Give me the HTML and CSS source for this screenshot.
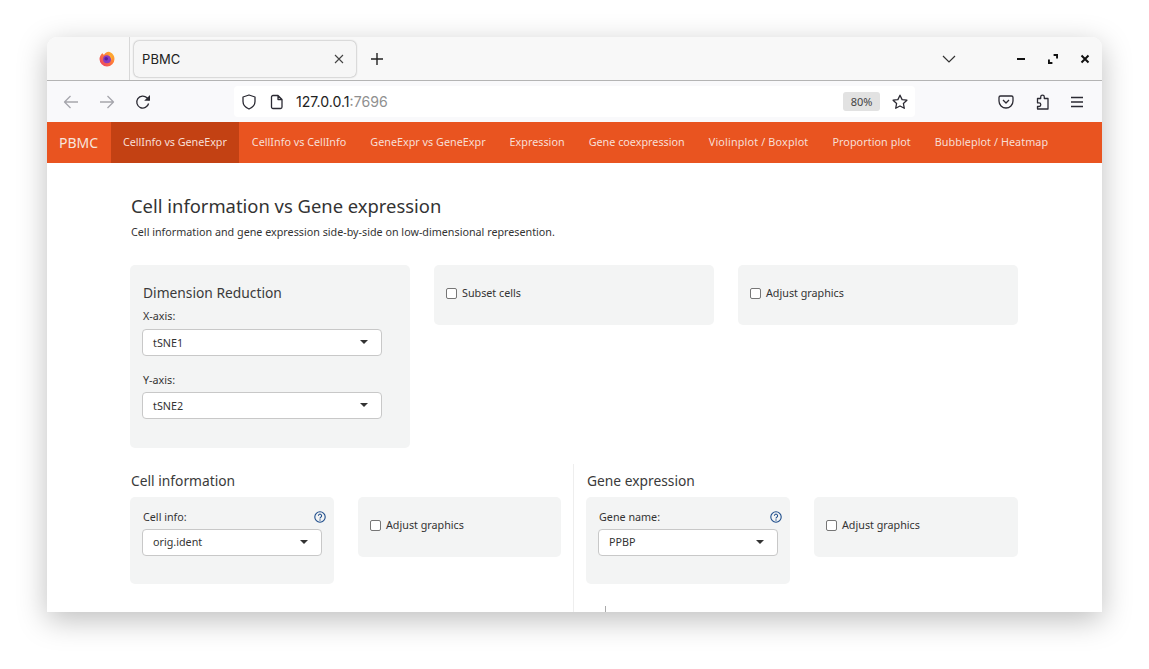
FILE: index.html
```html
<!DOCTYPE html>
<html lang="en">
<head>
<meta charset="utf-8">
<title>PBMC</title>
<link rel="stylesheet" href="styles.css">
</head>
<body>
<div class="window">
  <div class="titlebar">
    <div class="ff-slot">
      <svg class="ff" viewBox="0 0 16 16" width="16" height="16">
        <defs>
          <linearGradient id="ffg" x1="1" y1="0" x2="0" y2="1">
            <stop offset="0" stop-color="#ffc42e"/>
            <stop offset=".45" stop-color="#ff7a3a"/>
            <stop offset="1" stop-color="#e8366e"/>
          </linearGradient>
        </defs>
        <path d="M3.300 2.200C4 2.700 4.500 3.200 4.900 3.900 5.900 2.200 7.600 1 9.700.8 13 1.500 15.500 4.300 15.500 8A7.500 7.500 0 0 1 .5 8C.5 5.800 1.600 3.700 3.300 2.200Z" fill="url(#ffg)"/>
        <circle cx="8" cy="8.300" r="4" fill="#8a3cc0"/>
        <circle cx="7.200" cy="7.800" r="1.800" fill="#57209e"/>
        <path d="M11.400 3.800c1.500 1.500 2.100 3.300 1.500 5.500l-1-1.700c-.3-1.500-1.300-2.800-2.800-3.400Z" fill="#ffb02e"/>
      </svg>
    </div>
    <div class="tab"><span class="tab-title">PBMC</span>
      <svg class="tab-x" viewBox="0 0 10 10" width="10" height="10"><path d="M1 1l8 8M9 1l-8 8"/></svg>
    </div>
    <svg class="plus" viewBox="0 0 14 14" width="14" height="14"><path d="M7 1v12M1 7h12"/></svg>
    <div class="spacer"></div>
    <svg class="list-all" viewBox="0 0 14 8" width="14" height="8"><path d="M1 1l6 6 6-6"/></svg>
    <div class="win-controls">
      <svg viewBox="0 0 10 10" width="10" height="10"><path d="M1 5h8"/></svg>
      <svg viewBox="0 0 10 10" width="10" height="10"><path d="M5.600 .9h3.500v3.500M.9 5.600v3.500h3.500"/></svg>
      <svg viewBox="0 0 10 10" width="10" height="10"><path d="M1.500 1.500l7 7M8.500 1.500l-7 7"/></svg>
    </div>
  </div>
  <div class="toolbar">
    <div class="nav-btns">
      <svg class="ico dim" viewBox="0 0 16 16" width="16" height="16"><path d="M15 8H1.500M7.500 2l-6 6 6 6"/></svg>
      <svg class="ico dim" viewBox="0 0 16 16" width="16" height="16"><path d="M1 8h13.500M8.500 2l6 6-6 6"/></svg>
      <svg class="ico" viewBox="0 0 16 16" width="16" height="16"><path d="M13.600 9.500A6 6 0 1 1 12 3.800L14 6"/><path class="fill" d="M15 1v5.800H9.200Z"/></svg>
    </div>
    <div class="urlbar">
      <svg class="ico" viewBox="0 0 16 16" width="16" height="16"><path d="M8 1l6 2v4.500c0 3.500-2.500 6-6 7.500-3.500-1.500-6-4-6-7.500V3Z"/></svg>
      <svg class="ico page" viewBox="0 0 14 16" width="14" height="16"><path d="M3 1.500h5l4 4v7.500a1.500 1.500 0 0 1-1.500 1.500h-7.500A1.500 1.500 0 0 1 1.500 13V3A1.500 1.500 0 0 1 3 1.500ZM8 1.500v4h4"/></svg>
      <span class="url">127.0.0.1<span class="port">:7696</span></span>
      <div class="spacer"></div>
      <span class="zoom">80%</span>
      <svg class="ico star" viewBox="0 0 16 16" width="16" height="16"><path d="M8 1.200l2.100 4.400 4.800.6-3.500 3.300.9 4.800L8 12l-4.300 2.300.9-4.800L1.100 6.200l4.800-.6Z"/></svg>
    </div>
    <div class="tool-right">
      <svg class="ico" viewBox="0 0 16 16" width="16" height="16"><path d="M2.500 2h11A1.500 1.500 0 0 1 15 3.500V7a7 7 0 0 1-14 0V3.500A1.500 1.500 0 0 1 2.500 2ZM5 6l3 3 3-3"/></svg>
      <svg class="ico" viewBox="0 0 16 16" width="16" height="16"><path d="M6.700 4.500V3a1.800 1.800 0 0 1 3.600 0v1.500H14V15H3.500v-2.500H5a1.800 1.800 0 0 0 0-3.600H3.500V4.500Z"/></svg>
      <svg class="ico" viewBox="0 0 14 14" width="14" height="14"><path d="M1 2.500h12M1 7h12M1 11.500h12"/></svg>
    </div>
  </div>
  <nav class="navbar">
    <span class="brand">PBMC</span>
    <a class="nav-item active">CellInfo vs GeneExpr</a>
    <a class="nav-item">CellInfo vs CellInfo</a>
    <a class="nav-item">GeneExpr vs GeneExpr</a>
    <a class="nav-item">Expression</a>
    <a class="nav-item">Gene coexpression</a>
    <a class="nav-item wide">Violinplot / Boxplot</a>
    <a class="nav-item tight-wide">Proportion plot</a>
    <a class="nav-item tight-wide">Bubbleplot / Heatmap</a>
  </nav>
  <main class="content">
    <h3 class="page-title">Cell information vs Gene expression</h3>
    <p class="lead">Cell information and gene expression side-by-side on low-dimensional represention.</p>
    <div class="row-top">
      <section class="well well-dim">
        <h4 class="well-title">Dimension Reduction</h4>
        <label class="field-label">X-axis:</label>
        <div class="select">tSNE1<i class="caret"></i></div>
        <label class="field-label second">Y-axis:</label>
        <div class="select">tSNE2<i class="caret"></i></div>
      </section>
      <section class="well well-check"><label class="check"><i class="box"></i>Subset cells</label></section>
      <section class="well well-check"><label class="check"><i class="box"></i>Adjust graphics</label></section>
    </div>
    <div class="row-split">
      <div class="col col-left">
        <h4 class="section-title">Cell information</h4>
        <div class="pair">
          <section class="well well-input">
            <div class="label-row"><label class="field-label">Cell info:</label>
              <svg class="help" viewBox="0 0 12 12" width="12" height="12"><circle cx="6" cy="6" r="5.200"/><path d="M4.400 4.700a1.600 1.600 0 1 1 2.500 1.400c-.6.400-.9.700-.9 1.300"/><circle class="dot" cx="6" cy="9" r=".7"/></svg>
            </div>
            <div class="select">orig.ident<i class="caret"></i></div>
          </section>
          <section class="well well-check"><label class="check"><i class="box"></i>Adjust graphics</label></section>
        </div>
      </div>
      <div class="col col-right">
        <h4 class="section-title">Gene expression</h4>
        <div class="pair">
          <section class="well well-input">
            <div class="label-row"><label class="field-label">Gene name:</label>
              <svg class="help" viewBox="0 0 12 12" width="12" height="12"><circle cx="6" cy="6" r="5.200"/><path d="M4.400 4.700a1.600 1.600 0 1 1 2.500 1.400c-.6.400-.9.700-.9 1.300"/><circle class="dot" cx="6" cy="9" r=".7"/></svg>
            </div>
            <div class="select">PPBP<i class="caret"></i></div>
          </section>
          <section class="well well-check"><label class="check"><i class="box"></i>Adjust graphics</label></section>
        </div>
        <div class="plot-tick"></div>
      </div>
    </div>
  </main>
</div>
</body>
</html>
```
FILE: styles.css
```css
* { box-sizing: border-box; }
html, body { margin: 0; height: 100%; background: #fff; overflow: hidden; }
body { padding: 37px 47px 0; font-family: "Noto Sans", "Open Sans", sans-serif; color: #333; }
svg { display: block; flex: none; }
svg:not(.ff) path { fill: none; }

.window {
  width: 1055px; height: 575px; overflow: hidden; background: #fff;
  border-radius: 10px 10px 0 0;
  box-shadow: 0 8px 30px rgba(0, 0, 0, .26);
}
.spacer { flex: 1; }

.titlebar {
  height: 44px; display: flex; align-items: center;
  background: #f8f8f8; border-bottom: 1px solid #b4b4b4;
}
.ff-slot {
  width: 83px; height: 43px; display: flex; align-items: center; justify-content: flex-end;
  padding-right: 14px; border-right: 1px solid #d8d8d8; margin-right: 4px;
}
.tab {
  width: 222px; height: 36px; padding: 0 12px 0 8px; display: flex; align-items: center;
  justify-content: space-between; background: #f6f6f6; border-radius: 5px;
  box-shadow: 0 0 2px rgba(0, 0, 0, .45); font-family: "Inter", sans-serif;
  font-size: 13px; color: #222;
}
.tab-x path { stroke: #444; stroke-width: 1.100; }
.tab-title { letter-spacing: .1px; }
.plus { margin-left: 14px; }
.plus path { stroke: #222; stroke-width: 1.400; }
.list-all { margin-right: 60px; }
.list-all path { stroke: #333; stroke-width: 1.200; }
.win-controls { display: flex; gap: 22px; padding-right: 12px; }
.win-controls path { stroke: #111; stroke-width: 2; }

.toolbar {
  height: 41px; display: flex; align-items: center; background: #f9f9fb;
}
.ico path { stroke: #2b2a33; stroke-width: 1.300; stroke-linejoin: round; }
svg.ico path.fill { fill: #2b2a33; stroke: none; }
.ico.dim path { stroke: #a6a6ac; }
.nav-btns { width: 187px; padding-left: 16px; display: flex; gap: 20px; align-items: center; }
.urlbar {
  width: 681px; height: 31px; background: #fff; border-radius: 4px; display: flex; align-items: center;
  padding: 0 7px 0 7px; font-family: "Inter", sans-serif;
}
.page { margin-left: 13px; }
.url { margin-left: 12px; font-size: 14.100px; color: #222; }
.port { color: #8f8f8f; }
.zoom {
  width: 37px; height: 19px; border-radius: 3px; background: #e2e2e2; color: #444;
  font-size: 11px; line-height: 19px; text-align: center; margin-right: 12px;
  font-family: "Noto Sans", sans-serif;
}
.tool-right { display: flex; gap: 20px; padding-left: 83px; align-items: center; }

.navbar { height: 41px; display: flex; background: #e95420; align-items: stretch; color: #fff; }
.brand { width: 64px; padding-left: 12px; font-size: 14px; line-height: 41px; color: #f7e4dc; }
.nav-item { padding: 0 12px; font-size: 10.800px; line-height: 40px; color: #f8dfd5; white-space: nowrap; }
.nav-item.active { background: #c34113; letter-spacing: -.05px; margin-right: 1px; }
.nav-item.wide { letter-spacing: .16px; }
.nav-item.tight-wide { letter-spacing: .06px; }

.content { padding: 31px 84px 0 83px; }
.page-title { margin: 0; font-size: 18.400px; line-height: 24px; font-weight: 400; color: #333; padding-left: 1px; }
.lead { margin: 7px 0 0; font-size: 10.750px; line-height: 15px; color: #333; padding-left: 1px; }
.row-top { display: grid; grid-template-columns: repeat(3, 280px); gap: 24px; margin-top: 25px; align-items: start; }
.well { background: #f3f4f4; border-radius: 5px; padding: 12px; }
.well-dim { height: 183px; padding-top: 19px; }
.well-check { height: 60px; padding-top: 19px; }
.well-input { height: 87px; padding-top: 12px; }
.well-title { margin: 0; padding-left: 1px; font-size: 13.800px; line-height: 18px; font-weight: 400; color: #3a3a3a; }
.field-label { display: block; margin-top: 7px; padding-left: 1px; font-size: 10.750px; line-height: 14px; color: #333; }
.field-label.second { margin-top: 17px; }
.label-row { display: flex; justify-content: space-between; align-items: center; margin-right: -4px; height: 14px; margin-top: 1px; }
.label-row .field-label { margin: 0; }
.select {
  position: relative; height: 27px; margin-top: 6px; width: 240px; padding-left: 10px;
  border: 1px solid #c8c8c8; border-radius: 4px; background: #fff;
  font-size: 10.750px; line-height: 25px; color: #333;
}
.well-dim .select { line-height: 26px; }
.field-label.second + .select { margin-top: 5px; }
.well-input .select { width: 180px; margin-top: 5px; }
.caret {
  position: absolute; right: 13px; top: 10px; width: 0; height: 0;
  border-left: 4px solid transparent; border-right: 4px solid transparent; border-top: 4px solid #333;
}
.check { display: flex; align-items: center; font-size: 10.750px; line-height: 18px; color: #333; }
.box { width: 11px; height: 11px; margin-right: 5px; border: 1px solid #767676; border-radius: 2px; background: #fff; }
.help path, .help circle { fill: none; stroke: #1f4e8c; stroke-width: 1.100; }
svg.help .dot { fill: #1f4e8c; stroke: none; }

.row-split { display: grid; grid-template-columns: 443px 445px; margin-top: 16px; }
.col { height: 148px; overflow: hidden; }
.col-left { padding-right: 12px; }
.col-right { border-left: 1px solid #eeeeee; padding-left: 12px; position: relative; }
.section-title { margin: 8px 0 0; font-size: 13.800px; line-height: 18px; font-weight: 400; color: #3a3a3a; padding-left: 1px; }
.pair { display: grid; grid-template-columns: 204px 203px; gap: 24px; margin-top: 7px; align-items: start; }
.col-right .pair { grid-template-columns: 204px 204px; }
.plot-tick { position: absolute; left: 31px; top: 142px; width: 1px; height: 6px; background: #aaa; }
```
